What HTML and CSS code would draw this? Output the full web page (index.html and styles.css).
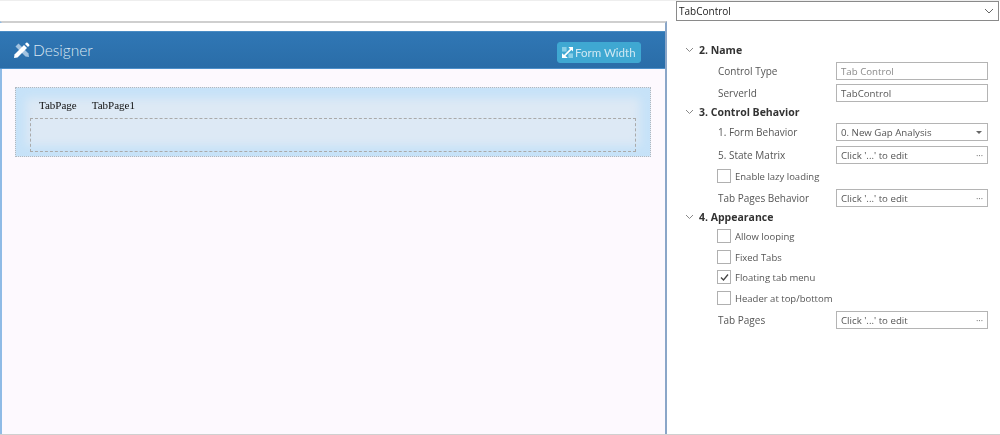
FILE: index.html
```html
<!DOCTYPE html>
<html>
<head>
<meta charset="utf-8">
<title>Designer</title>
<link rel="stylesheet" href="styles.css">
</head>
<body>
<div class="app">
  <main class="left">
    <div class="canvas">
      <div class="spacer"></div>
      <header class="bar">
        <div class="brand">
          <svg class="wand" width="16" height="16" viewBox="0 0 16 16"><path d="M1.500 4.500l3-3 10 10 .5 3.500-3.500-.5z" fill="#a3c3e0"/><path d="M.5 12.500L10 3l3 3-9.500 9.500-3.500.5z" fill="#fff"/><path d="M11 2l1.200-1.200a1 1 0 0 1 1.400 0l1.600 1.600a1 1 0 0 1 0 1.400L14 5z" fill="#fff"/></svg>
          <span class="title">Designer</span>
        </div>
        <button class="width-btn">
          <svg width="11" height="11" viewBox="0 0 12 12"><rect x="0" y="0" width="5" height="5" fill="#a9dff0" opacity=".7"/><rect x="7" y="7" width="5" height="5" fill="#a9dff0" opacity=".7"/><path d="M7 0h5v5l-1.700-1.700-6.600 6.600L6 11.500V12H0V7h.5l1.700 1.600 6.500-6.500z" fill="#fff"/></svg>
          <span>Form Width</span>
        </button>
      </header>
      <div class="stage">
        <section class="tabctl">
          <div class="tabs"><span>TabPage</span><span>TabPage1</span></div>
          <div class="droparea"></div>
        </section>
      </div>
    </div>
  </main>
  <aside class="props">
    <div class="combo"><span>TabControl</span><svg width="10" height="6" viewBox="0 0 10 6"><path d="M1 1l4 4 4-4" fill="none" stroke="#666"/></svg></div>
    <div class="list">
      <div class="row head"><svg class="chev" width="9" height="6" viewBox="0 0 9 6"><path d="M1 1l3.500 3.500L8 1" fill="none" stroke="#888"/></svg><b>2. Name</b></div>
      <div class="row m3"><label>Control Type</label><div class="field muted">Tab Control</div></div>
      <div class="row m4"><label>ServerId</label><div class="field">TabControl</div></div>
      <div class="row head m1"><svg class="chev" width="9" height="6" viewBox="0 0 9 6"><path d="M1 1l3.500 3.500L8 1" fill="none" stroke="#888"/></svg><b>3. Control Behavior</b></div>
      <div class="row m2"><label>1. Form Behavior</label><div class="field"><span>0. New Gap Analysis</span><i class="caret"></i></div></div>
      <div class="row m5"><label>5. State Matrix</label><div class="field"><span>Click '...' to edit</span><em>···</em></div></div>
      <div class="row m3"><i class="check"></i><span class="ck">Enable lazy loading</span></div>
      <div class="row m4"><label>Tab Pages Behavior</label><div class="field"><span>Click '...' to edit</span><em>···</em></div></div>
      <div class="row head m1"><svg class="chev" width="9" height="6" viewBox="0 0 9 6"><path d="M1 1l3.500 3.500L8 1" fill="none" stroke="#888"/></svg><b>4. Appearance</b></div>
      <div class="row m1"><i class="check"></i><span class="ck">Allow looping</span></div>
      <div class="row m3"><i class="check"></i><span class="ck">Fixed Tabs</span></div>
      <div class="row m2"><i class="check"><svg width="13" height="13" viewBox="0 0 13 13"><path d="M3 6.500l2.500 2.500L10 3.500" fill="none" stroke="#444" stroke-width="1.300"/></svg></i><span class="ck">Floating tab menu</span></div>
      <div class="row m3"><i class="check"></i><span class="ck">Header at top/bottom</span></div>
      <div class="row m4"><label>Tab Pages</label><div class="field"><span>Click '...' to edit</span><em>···</em></div></div>
    </div>
  </aside>
</div>
</body>
</html>
```
FILE: styles.css
```css
* { box-sizing: border-box; }
html, body { margin: 0; padding: 0; background: #fff; }
body { width: 1000px; height: 435px; overflow: hidden; font-family: "Open Sans", "Noto Sans", sans-serif; }
.app { display: flex; width: 1000px; height: 435px; border-top: 1px solid #eee; border-bottom: 1px solid #d0d0d0; filter: blur(.35px); }
.left { width: 667px; padding-top: 20px; flex: none; }
.canvas { height: 413px; border-top: 2px solid #cfcfcf; border-right: 2px solid #8aa6c8; border-left: 2px solid #8fbbe6; display: flex; flex-direction: column; background: #fdf9fe; }
.spacer { height: 8px; background: #fff; margin: 0 0 0 -2px; flex: none; }
.bar { height: 38px; margin-left: -2px; flex: none; background: linear-gradient(#3077b5, #2a6da8); border-top: 1px solid #4a8cc4; border-bottom: 1px solid #4d8fc9; display: flex; align-items: center; justify-content: space-between; padding: 0 24px 0 14px; }
.brand { display: flex; align-items: center; gap: 3px; }
.wand { flex: none; }
.title { color: #dbe8f3; font-family: Lato, sans-serif; font-weight: 300; font-size: 15.500px; line-height: 20px; }
.width-btn { height: 21px; width: 84px; padding: 0 0 0 4px; margin-top: 4px; border: 1px solid #3fa8d2; border-radius: 3px; background: #3fa8d2; color: #cfe8f3; display: flex; align-items: center; gap: 2px; font-family: Lato, sans-serif; font-size: 11.500px; white-space: nowrap; }
.stage { flex: 1; padding: 18px 14px 0 13px; }
.tabctl { height: 70px; border: 1px dotted #b0b8c0; background: #dde9f5; box-shadow: inset 0 0 10px 10px #c6e2f8; padding: 8px 14px 0 14px; }
.tabs { display: flex; gap: 15px; height: 22px; padding-left: 9px; font-family: "Liberation Serif", serif; font-size: 11px; line-height: 18px; color: #111; }
.droparea { height: 34px; border: 1px dashed #aaa; }
.props { flex: 1; padding: 0 2px 0 9px; color: #555; font-size: 10px; }
.combo { height: 20px; width: 323px; border: 1px solid #8a8a8a; display: flex; align-items: center; justify-content: space-between; padding: 0 4px 0 2px; color: #222; background: #fff; }
.list { padding-top: 20px; }
.row { height: 18px; display: flex; align-items: center; padding-left: 42px; width: 312px; }
.head { padding-left: 9px; color: #333; font-size: 10.500px; }
.head b { font-weight: 700; }
.chev { margin-right: 5px; flex: none; }
.m1 { margin-top: 1px; } .m2 { margin-top: 2px; } .m3 { margin-top: 3px; } .m4 { margin-top: 4px; } .m5 { margin-top: 5px; }
.row label { width: 118px; flex: none; }
.ck { font-size: 9.500px; }
.field { width: 152px; height: 18px; border: 1px solid #b4b4b4; display: flex; align-items: center; justify-content: space-between; padding: 0 4px; color: #555; background: #fff; font-size: 9.700px; }
.muted { color: #8a8a8a; }
.field em { font-style: normal; font-size: 9px; color: #666; }
.caret { width: 0; height: 0; border: 3px solid transparent; border-top: 3px solid #666; margin: 3px 1px 0 0; }
.check { width: 14px; height: 14px; margin-left: -1px; border: 1px solid #b0b0b0; flex: none; display: block; margin-right: 4px; background: #fff; }
.check svg { display: block; }
```
